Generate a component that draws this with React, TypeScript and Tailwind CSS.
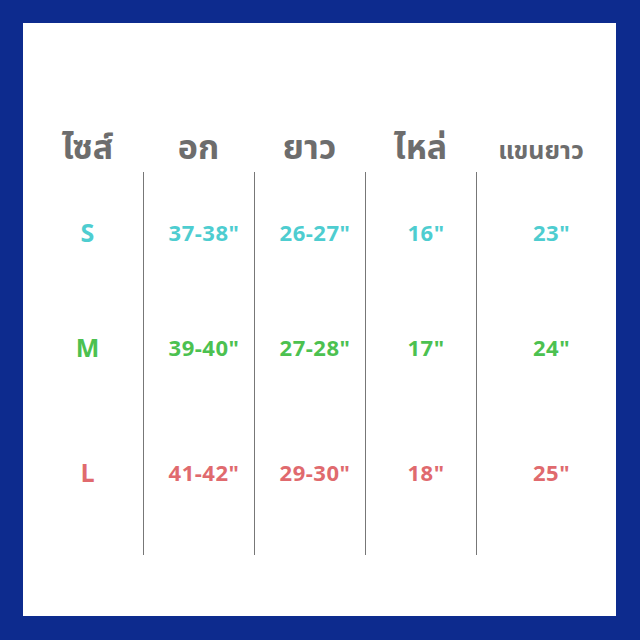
const headers = ["ไซส์", "อก", "ยาว", "ไหล่", "แขนยาว"];

const rows = [
  { size: "S", color: "text-[#4ecdd0]", values: ["37-38\"", "26-27\"", "16\"", "23\""] },
  { size: "M", color: "text-[#4cc150]", values: ["39-40\"", "27-28\"", "17\"", "24\""] },
  { size: "L", color: "text-[#e06a6e]", values: ["41-42\"", "29-30\"", "18\"", "25\""] },
];

const thai = "font-['Noto_Sans_Thai','Noto_Sans','DejaVu_Sans',sans-serif]";
const num = "font-['Open_Sans','Liberation_Sans',sans-serif]";

export default function App() {
  return (
    <div className="h-[640px] w-[640px] bg-[#0d2b8e] pb-[24px] pl-[23px] pr-[24px] pt-[23px]">
      <div className="h-full w-full bg-white pl-[9px]">
        <div className={`grid h-[149px] grid-cols-[111px_111px_111px_111px_1fr] items-end pb-[6px] ${thai} font-bold text-[#6d6d6d]`}>
          {headers.map((h, i) => (
            <div key={h} className={`text-center leading-none ${i === 4 ? "pb-[2px] pr-[10px] text-[25px]" : "text-[34px]"}`}>
              {h}
            </div>
          ))}
        </div>
        <div className={`grid h-[383px] grid-cols-[111px_111px_111px_111px_1fr] ${num} font-bold`}>
          <div className="flex flex-col items-center pt-[46px] text-[25px] leading-[28px]">
            {rows.map((r, i) => (
              <div key={r.size} className={`${r.color} ${i === 1 ? "mt-[87px]" : i === 2 ? "mt-[97px]" : ""}`}>
                {r.size}
              </div>
            ))}
          </div>
          {[0, 1, 2, 3].map((c) => (
            <div key={c} className="flex flex-col items-center border-l border-[#777777] pl-[10px] pt-[46px] text-[22px] leading-[28px] tracking-[0.5px]">
              {rows.map((r, i) => (
                <div key={r.size} className={`${r.color} ${i === 1 ? "mt-[87px]" : i === 2 ? "mt-[97px]" : ""}`}>
                  {r.values[c]}
                </div>
              ))}
            </div>
          ))}
        </div>
      </div>
    </div>
  );
}
